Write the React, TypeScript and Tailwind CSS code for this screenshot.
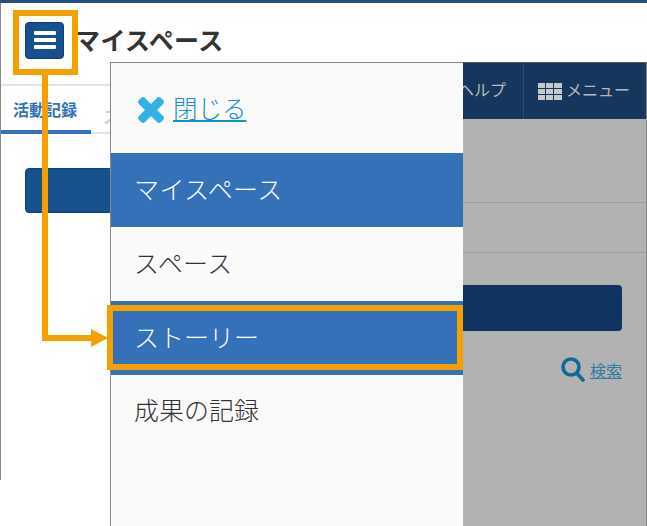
const jp = "font-['Noto_Sans_CJK_JP','Noto_Sans',sans-serif]";

const MenuIcon = () => (
  <div className="flex h-[37px] w-[39px] shrink-0 flex-col items-center justify-center gap-[3px] rounded-[4px] border border-[#123a6c] bg-[#17508f]">
    <span className="h-[4px] w-[22px] rounded-[1px] bg-white" />
    <span className="h-[4px] w-[22px] rounded-[1px] bg-white" />
    <span className="h-[4px] w-[22px] rounded-[1px] bg-white" />
  </div>
);

const GridIcon = () => (
  <div className="grid shrink-0 grid-cols-[7px_7px_8px] gap-x-[1px] gap-y-[1px]">
    {Array.from({ length: 9 }).map((_, i) => (
      <span key={i} className="h-[5px] bg-[#c8c8c8]" />
    ))}
  </div>
);

const Background = () => (
  <div className="flex h-[526px] w-[647px] flex-col bg-white">
    <div className="h-[3px] shrink-0 bg-[#24507f]" />
    <div className="flex h-[59px] shrink-0 items-center border-l border-[#8a8a8a] pl-[24px] pt-[15px]">
      <MenuIcon />
      <span className="mb-[2px] ml-[11px] whitespace-nowrap text-[25px] font-bold leading-none tracking-[0.4px] text-[#333]">マイスペース</span>
    </div>
    <div className="flex min-h-0 flex-1">
      <div className="flex h-[418px] w-[463px] shrink-0 flex-col border-l border-[#8a8a8a]">
        <div className="mt-[22px] h-[50px] border-t-2 border-[#e4e4e4]">
          <div className="flex h-[48px] items-end border-b-2 border-[#e4e4e4]">
            <div className="-mb-[2px] flex h-[48px] w-[90px] items-center border-b-[4px] border-[#3471b8] pl-[12px] pt-[2px]">
              <span className="whitespace-nowrap text-[16px] font-bold text-[#3471b8]">活動記録</span>
            </div>
            <span className="mb-[4px] ml-[12px] text-[16px] font-bold text-[#d0d0d0]">ス</span>
          </div>
        </div>
        <div className="ml-[24px] mt-[34px] h-[45px] w-[100px] rounded-[4px] border border-[#123f76] bg-[#17508f]" />
      </div>
      <div className="flex w-[184px] flex-col border-r border-[#8a8a8a] bg-[#b2b2b2]">
        <div className="flex h-[57px] shrink-0 justify-end border-t border-[#555] bg-[#17365d] text-[16px] text-[#b8b8b8]">
          <div className="flex items-center whitespace-nowrap border-r border-[#2b4a72] pb-[4px] pr-[17px]">ヘルプ</div>
          <div className="flex items-center gap-[4px] whitespace-nowrap pl-[14px] pr-[16px]">
            <GridIcon />
            <span className="pb-[4px]">メニュー</span>
          </div>
        </div>
        <div className="mt-[83px] h-[1px] bg-[#9c9c9c]" />
        <div className="mt-[49px] h-[1px] bg-[#9c9c9c]" />
        <div className="mt-[32px] h-[46px] w-[159px] rounded-r-[4px] bg-[#10335f]" />
        <div className="mr-[24px] mt-[26px] flex items-center justify-end gap-[5px]">
          <svg width="24" height="25" viewBox="0 0 24 25" fill="none" stroke="#0f6a9a" strokeWidth="3.6" strokeLinecap="round">
            <circle cx="10" cy="10" r="8" />
            <path d="M16 16.500 22 23" />
          </svg>
          <span className="text-[16px] text-[#2f7ba6] underline">検索</span>
        </div>
      </div>
    </div>
  </div>
);

const Drawer = () => (
  <div className="absolute left-[110px] top-[62px] flex h-[464px] w-[353px] flex-col border-l border-t border-[#8a8a8a] bg-[#fafafa]">
    <div className="flex h-[90px] shrink-0 items-center pl-[25px] pt-[3px]">
      <svg width="30" height="30" viewBox="0 0 30 30">
        <path d="M9 3 15 9 21 3Q23 1 25 3L27 5Q29 7 27 9L21 15 27 21Q29 23 27 25L25 27Q23 29 21 27L15 21 9 27Q7 29 5 27L3 25Q1 23 3 21L9 15 3 9Q1 7 3 5L5 3Q7 1 9 3Z" fill="#33b0e8" />
      </svg>
      <span className="ml-[7px] pb-[2px] text-[24.5px] font-light text-[#1a8fc9] underline">閉じる</span>
    </div>
    <div className="flex h-[74px] shrink-0 items-center bg-[#3471b8] pb-[2px] pl-[23px] text-[25px] font-light tracking-[0.4px] text-white">マイスペース</div>
    <div className="flex h-[74px] shrink-0 items-center pb-[2px] pl-[23px] text-[25px] font-light tracking-[0.4px] text-[#333]">スペース</div>
    <div className="flex h-[74px] shrink-0 items-center bg-[#3471b8] pb-[2px] pl-[23px] text-[25px] font-light text-white">ストーリー</div>
    <div className="flex h-[74px] shrink-0 items-center pb-[4px] pl-[23px] text-[25px] font-light text-[#333]">成果の記録</div>
  </div>
);

const Annotations = () => (
  <>
    <div className="absolute left-[13px] top-[10px] h-[65px] w-[65px] border-[6px] border-[#f4a000]" />
    <div className="absolute left-[42px] top-[75px] h-[266px] w-[6px] bg-[#f4a000]" />
    <div className="absolute left-[42px] top-[335px] h-[6px] w-[50px] bg-[#f4a000]" />
    <svg className="absolute left-[91px] top-[329px]" width="18" height="18" viewBox="0 0 18 18">
      <path d="M0 0 17 9 0 18Z" fill="#f4a000" />
    </svg>
    <div className="absolute left-[107px] top-[305px] h-[65px] w-[356px] border-[6px] border-[#f4a000]" />
  </>
);

export default function App() {
  return (
    <div className={`relative h-[526px] w-[647px] overflow-hidden ${jp}`}>
      <Background />
      <Drawer />
      <Annotations />
    </div>
  );
}
